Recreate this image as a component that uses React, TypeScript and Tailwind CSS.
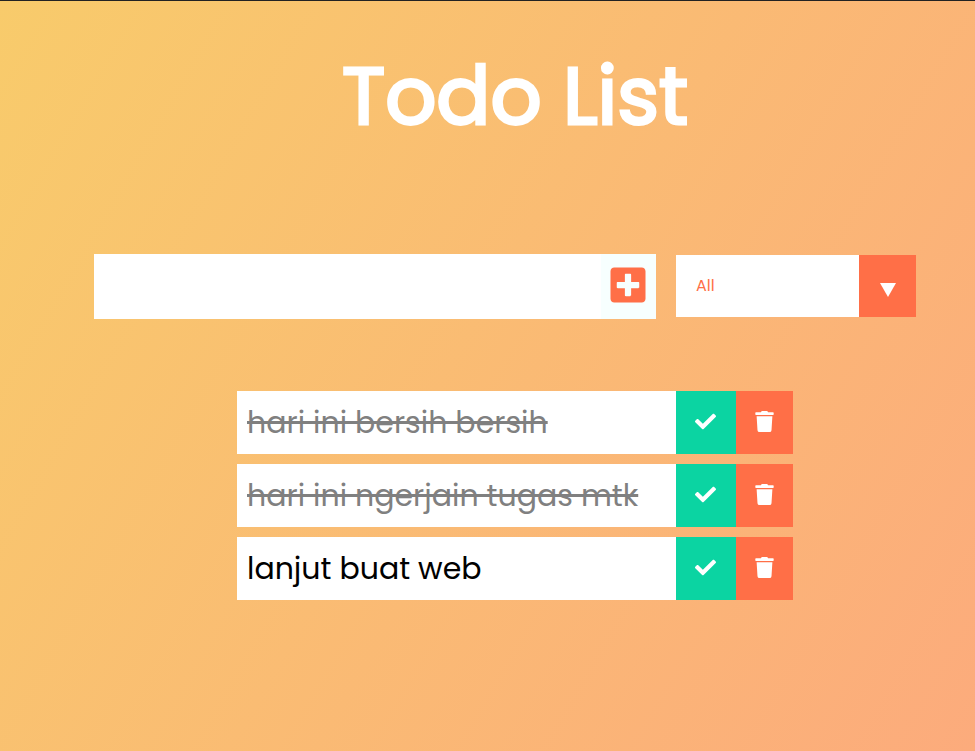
import { useState } from "react";
import type { FormEvent } from "react";
import { FaCheck, FaPlusSquare, FaTrash } from "react-icons/fa";

type Todo = { id: number; text: string; done: boolean };

const initialTodos: Todo[] = [
  { id: 1, text: "hari ini bersih bersih", done: true },
  { id: 2, text: "hari ini ngerjain tugas mtk", done: true },
  { id: 3, text: "lanjut buat web", done: false },
];

export default function App() {
  const [todos, setTodos] = useState(initialTodos);
  const [draft, setDraft] = useState("");
  const [filter, setFilter] = useState("all");

  const addTodo = (event: FormEvent) => {
    event.preventDefault();
    if (!draft.trim()) return;
    setTodos([...todos, { id: Date.now(), text: draft, done: false }]);
    setDraft("");
  };

  const toggle = (id: number) =>
    setTodos(todos.map((t) => (t.id === id ? { ...t, done: !t.done } : t)));

  const visible = todos.filter(
    (t) => filter === "all" || (filter === "completed") === t.done,
  );

  return (
    <div className="min-h-screen border-t border-[#222222] bg-linear-[120deg,#f8cb6b,#fcab7c] pl-[55px] font-['Poppins','Inter',sans-serif]">
      <header className="flex justify-center pt-[35px]">
        <h1 className="text-[80px] leading-[120px] font-normal text-white [-webkit-text-stroke:3px_white]">
          Todo List
        </h1>
      </header>

      <form onSubmit={addTodo} className="mt-[98px] flex items-start justify-center gap-5 pr-5">
        <div className="flex h-[65px]">
          <input
            type="text"
            aria-label="New task"
            value={draft}
            onChange={(e) => setDraft(e.target.value)}
            className="w-[507px] bg-white px-2 text-3xl outline-none"
          />
          <button
            type="submit"
            aria-label="Add task"
            className="flex w-[55px] items-center justify-center bg-[#f7fffe] pr-px pb-[3px] text-[#ff6f47]"
          >
            <FaPlusSquare size={40} />
          </button>
        </div>
        <div className="relative mt-px h-[62px] w-60">
          <select
            aria-label="Filter tasks"
            value={filter}
            onChange={(e) => setFilter(e.target.value)}
            className="size-full appearance-none rounded-none bg-white px-5 text-base text-[#ff6f47] outline-none"
          >
            <option value="all">All</option>
            <option value="completed">Completed</option>
            <option value="uncompleted">Uncompleted</option>
          </select>
          <div className="pointer-events-none absolute inset-y-0 right-0 flex w-[57px] items-center justify-center bg-[#ff6f47] pt-2">
            <svg width="16" height="14" viewBox="0 0 16 14" fill="white" aria-hidden="true">
              <path d="M0 0H16L8 14Z" />
            </svg>
          </div>
        </div>
      </form>

      <ul className="mx-auto mt-[72px] flex w-[556px] flex-col gap-2.5">
        {visible.map((todo) => (
          <li key={todo.id} className="flex h-[63px] bg-white">
            <span
              className={
                todo.done
                  ? "flex-1 px-2.5 text-[30px] leading-[63px] whitespace-nowrap text-[#808080]"
                  : "flex-1 px-2.5 text-[30px] leading-[63px] whitespace-nowrap text-black"
              }
            >
              <span className={todo.done ? "line-through" : ""}>{todo.text}</span>
            </span>
            <button
              type="button"
              aria-label={`Complete ${todo.text}`}
              onClick={() => toggle(todo.id)}
              className="flex w-[60px] items-center justify-center bg-[#0bd4a2] pr-px pb-0.5 text-white"
            >
              <FaCheck size={21} />
            </button>
            <button
              type="button"
              aria-label={`Delete ${todo.text}`}
              onClick={() => setTodos(todos.filter((t) => t.id !== todo.id))}
              className="flex w-[57px] items-center justify-center bg-[#ff6f47] pr-px pb-0.5 text-white"
            >
              <FaTrash size={21} />
            </button>
          </li>
        ))}
      </ul>
    </div>
  );
}
